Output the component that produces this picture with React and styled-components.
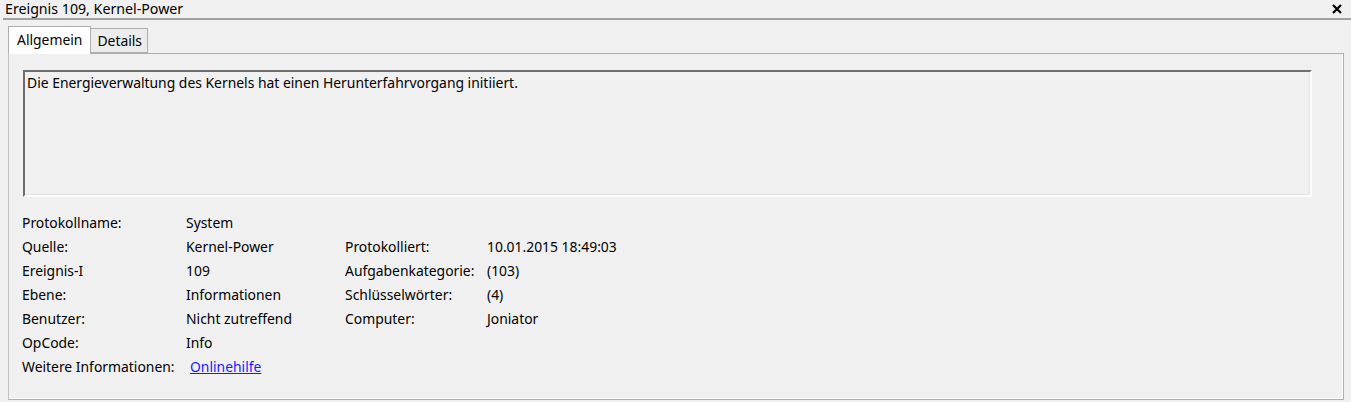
import styled, { createGlobalStyle } from 'styled-components'

const GlobalStyle = createGlobalStyle`
  html, body {
    margin: 0;
    padding: 0;
    background: #f0f0f0;
  }
  body {
    font-family: "Noto Sans", "Open Sans", sans-serif;
    color: #000;
  }
`

const Window = styled.div`
  width: 1351px;
  height: 402px;
  overflow: hidden;
  background: #f0f0f0;
`

const TitleBar = styled.div`
  height: 18px;
  display: flex;
  align-items: center;
  justify-content: space-between;
  padding: 0 9px 0 5px;
  font-size: 14.2px;
  line-height: 18px;
`

const CloseButton = styled.button`
  border: 0;
  background: none;
  padding: 0;
  width: 10px;
  height: 10px;
  display: flex;
  cursor: pointer;
`

const Separator = styled.div`
  margin-left: 3px;
  height: 2px;
  background: #a0a0a0;
`

const TabArea = styled.div`
  padding: 6px 0 0 8px;
  width: 1336px;
`

const TabStrip = styled.div`
  display: flex;
  align-items: flex-end;
  height: 27px;
`

const Tab = styled.div`
  box-sizing: border-box;
  height: ${p => (p.$active ? '28px' : '25px')};
  padding: ${p => (p.$active ? '0 8px 0 8px' : '0 5px 0 6px')};
  margin-bottom: ${p => (p.$active ? '-1px' : '0')};
  border: 1px solid #adadad;
  border-bottom: ${p => (p.$active ? 'none' : '1px solid #adadad')};
  border-left: ${p => (p.$active ? '1px solid #adadad' : 'none')};
  background: ${p => (p.$active ? '#ffffff' : '#ececec')};
  font-size: 13.9px;
  line-height: ${p => (p.$active ? '26px' : '24px')};
  position: relative;
  z-index: ${p => (p.$active ? 1 : 0)};
`

const Panel = styled.div`
  box-sizing: border-box;
  height: 347px;
  border: 1px solid #adadad;
  border-left-color: #c4c4c4;
  box-shadow: inset -1px -1px 0 #ffffff;
  padding: 16px 31px 0 14px;
`

const MessageBox = styled.div`
  box-sizing: border-box;
  height: 127px;
  border-top: 2px solid #6d6d6d;
  border-left: 2px solid #6d6d6d;
  border-right: 2px solid #ffffff;
  border-bottom: 2px solid #ffffff;
  box-shadow: inset -1px -1px 0 #e3e3e3;
  padding: 2px 2px;
  font-size: 13.9px;
  line-height: 18px;
`

const InfoGrid = styled.div`
  display: grid;
  grid-template-columns: 164px 159px 142px 1fr;
  grid-auto-rows: 24px;
  margin: 13px 0 0 -1px;
  font-size: 13.9px;
  align-items: center;
`

const Cell = styled.div`
  white-space: nowrap;
  padding-left: ${p => (p.$indent ? '4px' : '0')};
`

const Link = styled.a`
  color: #1a1aff;
  text-decoration: underline;
  cursor: pointer;
`

const rows = [
  ['Protokollname:', 'System', '', ''],
  ['Quelle:', 'Kernel-Power', 'Protokolliert:', '10.01.2015 18:49:03'],
  ['Ereignis-I', '109', 'Aufgabenkategorie:', '(103)'],
  ['Ebene:', 'Informationen', 'Schlüsselwörter:', '(4)'],
  ['Benutzer:', 'Nicht zutreffend', 'Computer:', 'Joniator'],
  ['OpCode:', 'Info', '', ''],
]

const App = () => {
  return (
    <Window>
      <GlobalStyle />
      <TitleBar>
        <span>Ereignis 109, Kernel-Power</span>
        <CloseButton aria-label="Schließen">
          <svg width="10" height="10" viewBox="0 0 10 10">
            <path d="M1 1 L9 9 M9 1 L1 9" stroke="#000" strokeWidth="2.2" />
          </svg>
        </CloseButton>
      </TitleBar>
      <Separator />
      <TabArea>
        <TabStrip>
          <Tab $active>Allgemein</Tab>
          <Tab>Details</Tab>
        </TabStrip>
        <Panel>
          <MessageBox>
            Die Energieverwaltung des Kernels hat einen Herunterfahrvorgang initiiert.
          </MessageBox>
          <InfoGrid>
            {rows.map((r, i) =>
              r.map((c, j) => <Cell key={i + '-' + j}>{c}</Cell>)
            )}
            <Cell>Weitere Informationen:</Cell>
            <Cell $indent>
              <Link>Onlinehilfe</Link>
            </Cell>
          </InfoGrid>
        </Panel>
      </TabArea>
    </Window>
  )
}

export default App
